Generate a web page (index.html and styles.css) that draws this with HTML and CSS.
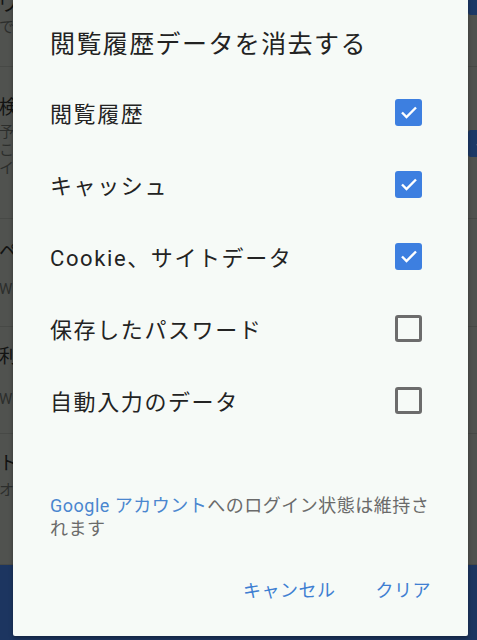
FILE: index.html
```html
<!DOCTYPE html>
<html lang="ja">
<head>
    <meta charset="UTF-8">
    <meta name="viewport" content="width=device-width, initial-scale=1">
    <title>閲覧履歴データを消去する</title>
    <link rel="stylesheet" href="styles.css">
</head>
<body>
    <!-- settings page behind the dialog (dimmed) -->
    <div class="page">
        <div class="item item-1">
            <div class="item-text">
                <p class="item-title">ウ</p>
                <p class="item-sub">で</p>
            </div>
            <span class="bg-check"></span>
        </div>
        <div class="item item-2">
            <div class="item-text">
                <p class="item-title">検</p>
                <p class="item-sub">予<br>こ<br>イ</p>
            </div>
            <span class="bg-check">
                <svg viewBox="0 0 24 24" width="14" height="14"><path d="M5 12.5l4.5 4.5L19 7.5" fill="none" stroke="#8a8f96" stroke-width="2.6"/></svg>
            </span>
        </div>
        <div class="item item-3">
            <div class="item-text">
                <p class="item-title">ペ</p>
                <p class="item-sub">W</p>
            </div>
        </div>
        <div class="item item-4">
            <div class="item-text">
                <p class="item-title">利</p>
                <p class="item-sub">W</p>
            </div>
        </div>
        <div class="item item-5">
            <div class="item-text">
                <p class="item-title">ト</p>
                <p class="item-sub">オ</p>
            </div>
        </div>
        <div class="bottom-bar"></div>
    </div>

    <!-- dialog -->
    <div class="dialog">
        <p class="dialog-title">閲覧履歴データを消去する</p>
        <ul class="options">
            <li class="option">
                <span class="label">閲覧履歴</span>
                <span class="box checked">
                    <svg viewBox="0 0 24 24" width="24" height="24"><path d="M5 12.5l4.5 4.5L19 7.5" fill="none" stroke="#fff" stroke-width="2.4"/></svg>
                </span>
            </li>
            <li class="option">
                <span class="label">キャッシュ</span>
                <span class="box checked">
                    <svg viewBox="0 0 24 24" width="24" height="24"><path d="M5 12.5l4.5 4.5L19 7.5" fill="none" stroke="#fff" stroke-width="2.4"/></svg>
                </span>
            </li>
            <li class="option">
                <span class="label">Cookie、サイトデータ</span>
                <span class="box checked">
                    <svg viewBox="0 0 24 24" width="24" height="24"><path d="M5 12.5l4.5 4.5L19 7.5" fill="none" stroke="#fff" stroke-width="2.4"/></svg>
                </span>
            </li>
            <li class="option">
                <span class="label">保存したパスワード</span>
                <span class="box"></span>
            </li>
            <li class="option">
                <span class="label">自動入力のデータ</span>
                <span class="box"></span>
            </li>
        </ul>
        <p class="note"><span class="link">Google アカウント</span>へのログイン状態は維持されます</p>
        <div class="actions">
            <button class="action">キャンセル</button>
            <button class="action">クリア</button>
        </div>
    </div>
</body>
</html>
```

FILE: styles.css
```css
html, body {
    margin: 0;
    height: 100%;
    overflow: hidden;
}
body {
    background-color: #50524f;
    font-family: Roboto, "Noto Sans CJK JP", sans-serif;
    position: relative;
}
p {
    margin: 0;
}

/* page behind */
.page {
    display: flex;
    flex-direction: column;
    height: 100%;
}
.item {
    display: flex;
    justify-content: space-between;
    align-items: flex-start;
    border-bottom: 1px solid #474946;
    box-sizing: border-box;
    flex-shrink: 0;
}
.item-1 { height: 67px; }
.item-2 { height: 152px; padding-top: 29px; }
.item-3 { height: 108px; padding-top: 21px; }
.item-4 { height: 107px; padding-top: 18px; }
.item-5 { height: 131px; padding-top: 18px; }
.item-1 .item-title { margin-top: -7px; }
.item-1 .item-sub { margin-top: 1px; }
.item-2 .item-sub { margin-top: 3px; }
.item-3 .item-sub { margin-top: 16px; }
.item-4 .item-sub { margin-top: 21px; }
.item-5 .item-sub { margin-top: 5px; }
.item-text {
    margin-left: -1px;
}
.item-title {
    font-size: 19px;
    line-height: 24px;
    color: #121312;
}
.item-sub {
    font-size: 15px;
    line-height: 18px;
    color: #2c2e2c;
}
.bg-check {
    width: 26px;
    height: 27px;
    border-radius: 3px;
    background-color: #1c3866;
    margin-right: -17px;
    display: flex;
    align-items: center;
    justify-content: center;
}
.item-1 .bg-check { margin-top: -12px; }
.item-2 .bg-check { margin-top: 34px; }
.bottom-bar {
    flex: 1;
    background-color: #1c3560;
}

/* dialog */
.dialog {
    position: absolute;
    left: 13px;
    top: -4px;
    bottom: 4px;
    width: 455px;
    background-color: #f6faf7;
    border-radius: 2px;
    box-shadow: 0 2px 4px rgba(0, 0, 0, 0.35);
    box-sizing: border-box;
    padding: 26px 46px 0 37px;
    display: flex;
    flex-direction: column;
    font-family: "Noto Sans CJK JP", sans-serif;
}
.dialog-title {
    font-size: 25px;
    line-height: 40px;
    color: #222;
    letter-spacing: 1.4px;
}
.options {
    list-style: none;
    margin: 14px 0 0;
    padding: 0;
}
.option {
    height: 72px;
    display: flex;
    align-items: center;
    justify-content: space-between;
}
.label {
    font-size: 22px;
    letter-spacing: 1.6px;
    color: #232323;
    font-family: Roboto, "Noto Sans CJK JP", sans-serif;
}
.box {
    width: 27px;
    height: 27px;
    border-radius: 3px;
    box-sizing: border-box;
    border: 3px solid #6c6c6c;
    display: flex;
    align-items: center;
    justify-content: center;
}
.box.checked {
    border: none;
    background-color: #3d7fe0;
}
.note {
    margin-top: 58px;
    margin-right: -10px;
    font-size: 18px;
    line-height: 23px;
    letter-spacing: 0.5px;
    color: #6a6a6a;
    font-family: Roboto, "Noto Sans CJK JP", sans-serif;
}
.link {
    color: #4a86cf;
}
.actions {
    margin-top: 31px;
    display: flex;
    justify-content: flex-end;
    gap: 40px;
    margin-right: -9px;
}
.action {
    border: none;
    background: none;
    padding: 0;
    height: 36px;
    font-family: "Noto Sans CJK JP", sans-serif;
    font-size: 18px;
    letter-spacing: 0.5px;
    color: #3f7fd2;
}
```
